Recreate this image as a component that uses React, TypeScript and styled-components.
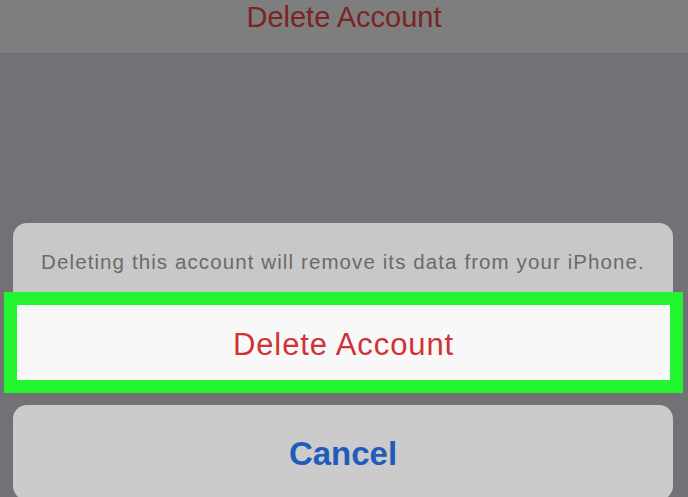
import React from "react";
import styled, { createGlobalStyle } from "styled-components";

const Global = createGlobalStyle`
  html, body {
    margin: 0;
    padding: 0;
    background: #717176;
  }
  body {
    font-family: "Liberation Sans", Arial, sans-serif;
    overflow: hidden;
  }
`;

export default function App() {
  return (
    <Screen>
      <Global />
      <TopBar>
        <TopAction>Delete Account</TopAction>
      </TopBar>

      <Sheet>
        <ActionGroup>
          <Message>Deleting this account will remove its data from your iPhone.</Message>
          <ActionButton $highlight tone="danger">
            Delete Account
          </ActionButton>
        </ActionGroup>

        <CancelGroup>
          <ActionButton tone="primary" bold>
            Cancel
          </ActionButton>
        </CancelGroup>
      </Sheet>
    </Screen>
  );
}

const Screen = styled.div`
  width: 688px;
  height: 497px;
  overflow: hidden;
  display: flex;
  flex-direction: column;
  background: #717176;
`;

const TopBar = styled.div`
  height: 53px;
  flex-shrink: 0;
  background: #7e7e7e;
  border-bottom: 1px solid #6c6c6e;
  display: flex;
  justify-content: center;
  align-items: flex-start;
`;

const TopAction = styled.span`
  margin-top: 1px;
  font-size: 29px;
  line-height: 32px;
  color: #7a2424;
`;

const Sheet = styled.div`
  flex-shrink: 0;
  padding: 169px 15px 0 13px;
  display: flex;
  flex-direction: column;
  gap: 25px;
`;

const ActionGroup = styled.div`
  background: #c8c8c8;
  border-radius: 14px;
  display: flex;
  flex-direction: column;
`;

const Message = styled.div`
  padding: 27px 0 0;
  height: 82px;
  box-sizing: border-box;
  text-align: center;
  font-size: 20.5px;
  letter-spacing: 1.1px;
  line-height: 24px;
  color: #6a6a6a;
`;

const ActionButton = styled.div<{
  tone: "danger" | "primary";
  bold?: boolean;
  $highlight?: boolean;
}>`
  height: 75px;
  flex-shrink: 0;
  box-sizing: border-box;
  display: flex;
  align-items: center;
  justify-content: center;
  font-size: ${(p) => (p.bold ? "33px" : "31px")};
  font-weight: ${(p) => (p.bold ? 700 : 400)};
  letter-spacing: ${(p) => (p.bold ? "0" : "0.9px")};
  color: ${(p) => (p.tone === "danger" ? "#d03236" : "#1f5cbc")};
  ${(p) =>
    p.$highlight &&
    `
    margin: 0 3px 0 4px;
    padding-top: 5px;
    background: #f8f8f8;
    outline: 13px solid #22f52f;
  `}
`;

const CancelGroup = styled.div`
  height: 95px;
  flex-shrink: 0;
  background: #cbcbcb;
  border-radius: 14px;
  display: flex;
  flex-direction: column;
  justify-content: center;

  ${ActionButton} {
    padding-top: 3px;
  }
`;
